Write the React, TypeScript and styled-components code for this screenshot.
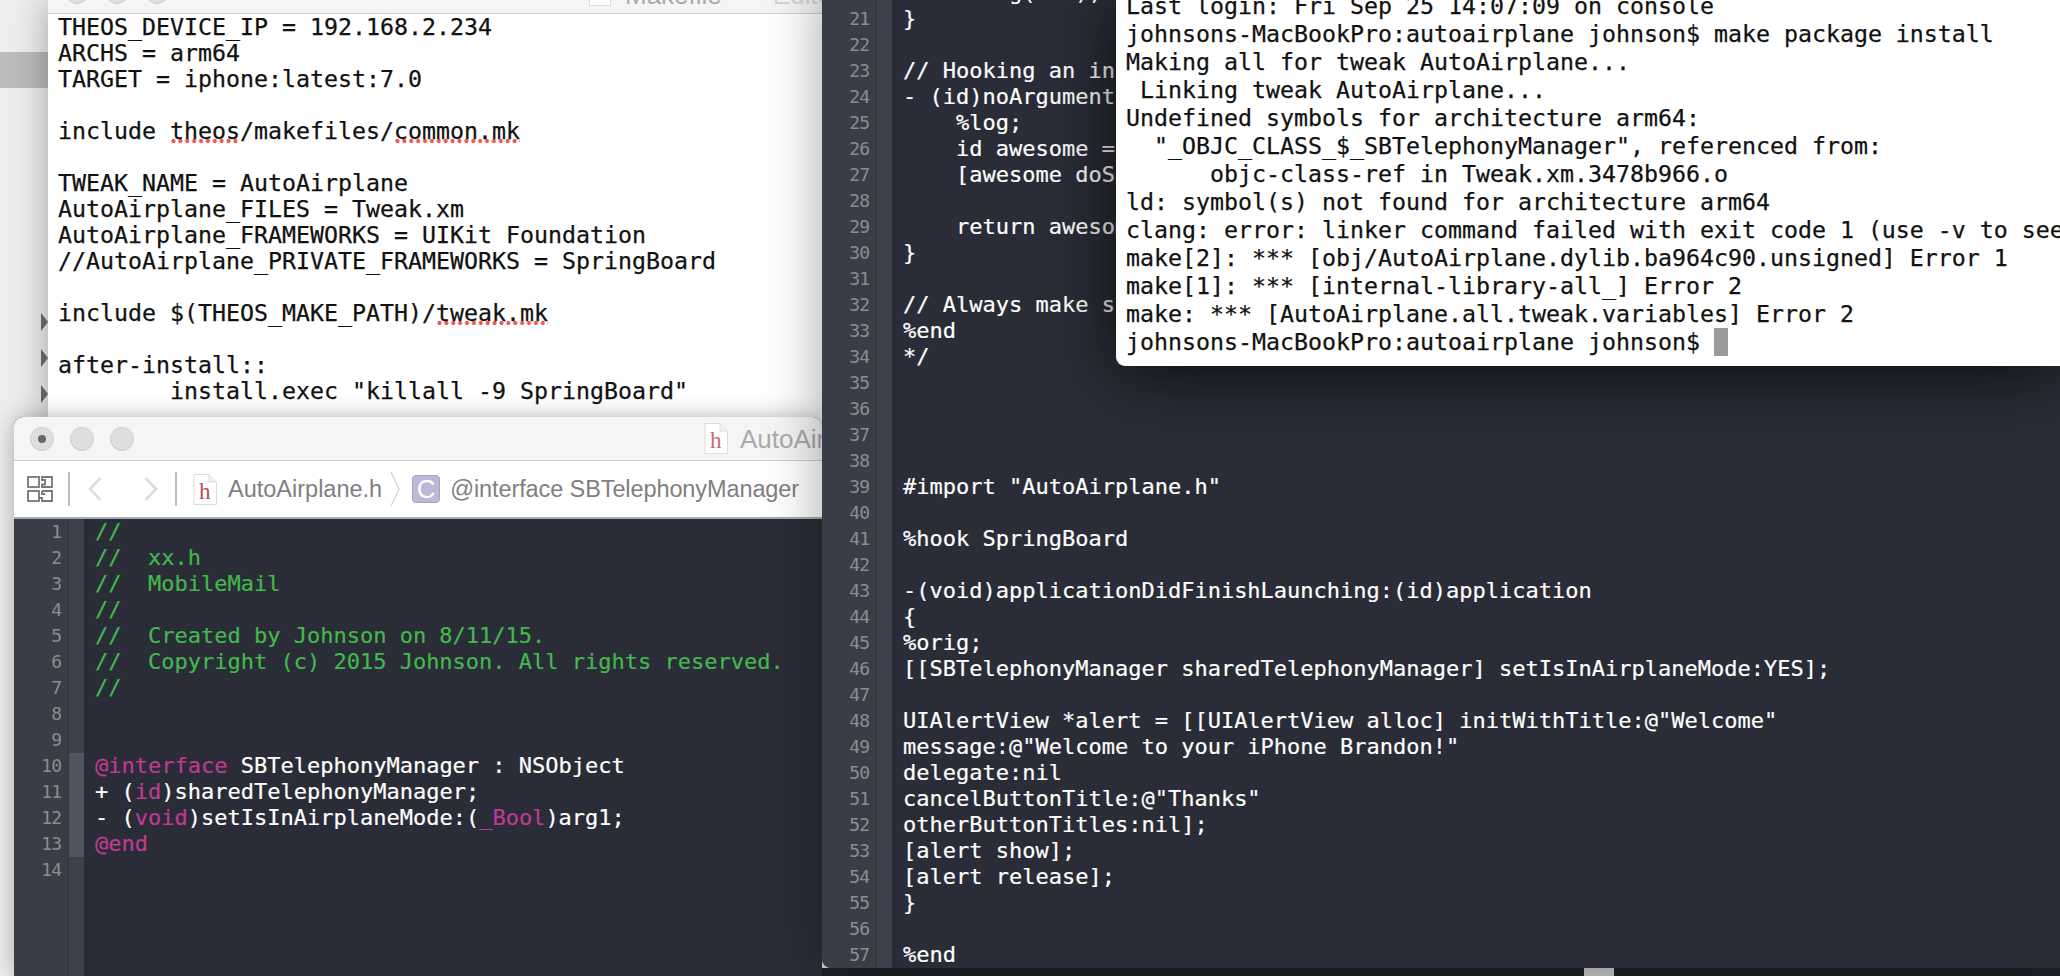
import React from "react";
import styled, { createGlobalStyle } from "styled-components";

const Global = createGlobalStyle`
  html, body { margin: 0; padding: 0; width: 100%; height: 100%; overflow: hidden; background: #eeeeee; }
  #root { width: 100%; height: 100%; }
`;

const MONO = `"DejaVu Sans Mono", "Liberation Mono", monospace`;
const SANS = `"Liberation Sans", Arial, sans-serif`;

const Desktop = styled.div`
  position: relative;
  width: 2060px;
  height: 976px;
  overflow: hidden;
  background: #eeeeee;
`;

const Sidebar = styled.div`
  position: absolute;
  left: 0;
  top: 0;
  width: 48px;
  height: 100%;
  display: flex;
  flex-direction: column;
  align-items: flex-end;
`;
const SelectedRow = styled.div`
  margin-top: 52px;
  width: 100%;
  height: 36px;
  background: #bcbcbc;
`;
const Disclosures = styled.div`
  margin-top: 225px;
  display: flex;
  flex-direction: column;
  gap: 18px;
`;
const Disclosure = styled.div`
  width: 0;
  height: 0;
  border-style: solid;
  border-width: 9px 0 9px 7px;
  border-color: transparent transparent transparent #6f6f6f;
`;

const TextWindow = styled.section`
  position: absolute;
  left: 48px;
  top: 0;
  width: 780px;
  height: 430px;
  background: #ffffff;
  box-shadow: 0 0 34px rgba(0, 0, 0, 0.32);
`;
const TitleBar = styled.header<{ $height: number; $align: string }>`
  box-sizing: content-box;
  height: ${(p) => p.$height}px;
  display: flex;
  align-items: ${(p) => p.$align};
  background: #f5f5f5;
  border-bottom: 1px solid #cfcfcf;
  overflow: hidden;
  white-space: nowrap;
`;
const Lights = styled.div<{ $left: number; $drop: number }>`
  display: flex;
  gap: 16px;
  margin-left: ${(p) => p.$left}px;
  margin-bottom: ${(p) => p.$drop}px;
  flex: none;
`;
const Light = styled.div`
  width: 24px;
  height: 24px;
  box-sizing: border-box;
  border-radius: 50%;
  background: #dedede;
  border: 1px solid #cdcdcd;
  display: flex;
  align-items: center;
  justify-content: center;
`;
const LightDot = styled.div`
  width: 8px;
  height: 8px;
  border-radius: 50%;
  background: #666666;
`;
const TitleIcon = styled.div<{ $left: number; $drop: number }>`
  margin-left: ${(p) => p.$left}px;
  margin-bottom: ${(p) => p.$drop}px;
  flex: none;
  display: flex;
`;
const BlankDoc = styled.div`
  width: 22px;
  height: 30px;
  box-sizing: border-box;
  background: #ffffff;
  border: 1px solid #dcdcdc;
`;
const TitleText = styled.span<{ $left: number; $drop: number; $pale?: boolean }>`
  margin-left: ${(p) => p.$left}px;
  margin-bottom: ${(p) => p.$drop}px;
  font: 26px/30px ${SANS};
  color: ${(p) => (p.$pale ? "#d4d4d4" : "#ababab")};
  flex: none;
`;

const PlainText = styled.div`
  padding-left: 10px;
  font: 23.25px/26px ${MONO};
  color: #111111;
  -webkit-text-stroke: 0.25px #111111;
  white-space: pre;
`;
const PlainLine = styled.div`
  height: 26px;
`;
const Misspelt = styled.span`
  background-image: radial-gradient(circle, #f25a5a 1.9px, transparent 2.2px);
  background-size: 6.9px 4px;
  background-repeat: repeat-x;
  background-position: 0 calc(100% - 1px);
`;

const XcodeWindow = styled.section`
  position: absolute;
  left: 14px;
  top: 417px;
  width: 808px;
  bottom: 0;
  display: flex;
  flex-direction: column;
  border-radius: 9px 9px 0 0;
  overflow: hidden;
  box-shadow: 0 0 22px rgba(0, 0, 0, 0.3);
  background: #2a2d38;
`;
const Toolbar = styled.nav`
  height: 56px;
  flex: none;
  display: flex;
  align-items: center;
  padding-left: 13px;
  background: #ffffff;
  border-bottom: 2px solid #a9a9a9;
  white-space: nowrap;
`;
const Separator = styled.div<{ $left: number }>`
  width: 2px;
  height: 34px;
  margin-left: ${(p) => p.$left}px;
  background: #bdbdbd;
  flex: none;
`;
const ToolIcon = styled.svg<{ $left?: number }>`
  margin-left: ${(p) => p.$left ?? 0}px;
  flex: none;
  display: block;
`;
const Crumb = styled.span<{ $left: number; $tight?: boolean }>`
  margin-left: ${(p) => p.$left}px;
  font: 23.5px/30px ${SANS};
  letter-spacing: ${(p) => (p.$tight ? "-0.1px" : "0")};
  color: #7f7f7f;
  flex: none;
`;
const ClassBadge = styled.div`
  margin-left: 12px;
  width: 28px;
  height: 28px;
  box-sizing: border-box;
  border-radius: 4px;
  background: #bfb7d8;
  border: 1px solid #a99fc9;
  color: #ffffff;
  font: 26px/26px ${SANS};
  text-align: center;
  flex: none;
`;

const EditorBody = styled.div`
  flex: 1;
  height: 100%;
  display: flex;
  min-height: 0;
  overflow: hidden;
  background: #2a2d38;
`;
const Gutter = styled.div`
  width: 55px;
  flex: none;
  box-sizing: border-box;
  padding-right: 7px;
  background: #3a3d47;
  border-right: 1px solid #30333c;
  font: 18px/26px ${MONO};
  letter-spacing: -1px;
  color: #8b8d92;
  text-align: right;
`;
const GutterNumber = styled.div`
  height: 26px;
`;
const FoldStrip = styled.div`
  width: 15px;
  flex: none;
  background: #3e414b;
`;
const FoldHighlight = styled.div<{ $from: number; $count: number }>`
  margin-top: ${(p) => p.$from * 26}px;
  height: ${(p) => p.$count * 26}px;
  background: #51545f;
`;
const Code = styled.div`
  flex: 1;
  padding-left: 11px;
  font: 22px/26px ${MONO};
  color: #ffffff;
  -webkit-text-stroke: 0.2px currentColor;
  white-space: pre;
  min-width: 0;
`;
const CodeLine = styled.div`
  height: 26px;
`;
const Comment = styled.span`
  color: #43b84c;
`;
const Keyword = styled.span`
  color: #bf3a92;
`;

const BottomStrip = styled.div`
  position: absolute;
  left: 822px;
  right: 0;
  bottom: 0;
  height: 8px;
  background: #1f2229;
`;
const ScrollThumb = styled.div`
  position: absolute;
  left: 762px;
  top: 0;
  width: 30px;
  height: 8px;
  background: #c9c9c9;
`;

const SourceWindow = styled.section`
  position: absolute;
  left: 822px;
  right: 0;
  top: -20px;
  bottom: 8px;
  display: flex;
  border-bottom-left-radius: 9px;
  overflow: hidden;
  box-shadow: 0 0 55px rgba(0, 0, 0, 0.36);
`;

const Terminal = styled.section`
  position: absolute;
  left: 1116px;
  right: 0;
  top: -8px;
  height: 374px;
  box-sizing: border-box;
  padding-left: 10px;
  background: #ffffff;
  border-bottom-left-radius: 9px;
  box-shadow: 0 8px 70px rgba(0, 0, 0, 0.7);
  font: 23.25px/28px ${MONO};
  color: #111111;
  -webkit-text-stroke: 0.25px #111111;
  white-space: pre;
  overflow: hidden;
`;
const TerminalLine = styled.div`
  height: 28px;
`;
const Cursor = styled.span`
  display: inline-block;
  width: 14px;
  height: 28px;
  vertical-align: top;
  background: #9a9a9a;
`;

const HFile = ({ ink, left = 0 }: { ink: string; left?: number }) => (
  <ToolIcon $left={left} width="24" height="31" viewBox="0 0 24 31" aria-hidden="true">
    <path d="M1 .5H16L23.5 8V30.5H1Z" fill="#ffffff" stroke="#dcdcdc" />
    <path d="M16 .5V8H23.5" fill="#f1f1f1" stroke="#dcdcdc" />
    <text x="6" y="25" fontFamily="'Liberation Serif', serif" fontSize="23" fill={ink}>h</text>
  </ToolIcon>
);

const makefile: React.ReactNode[] = [
  "THEOS_DEVICE_IP = 192.168.2.234",
  "ARCHS = arm64",
  "TARGET = iphone:latest:7.0",
  "",
  <>include <Misspelt>theos</Misspelt>/makefiles/<Misspelt>common.mk</Misspelt></>,
  "",
  "TWEAK_NAME = AutoAirplane",
  "AutoAirplane_FILES = Tweak.xm",
  "AutoAirplane_FRAMEWORKS = UIKit Foundation",
  "//AutoAirplane_PRIVATE_FRAMEWORKS = SpringBoard",
  "",
  <>include $(THEOS_MAKE_PATH)/<Misspelt>tweak.mk</Misspelt></>,
  "",
  "after-install::",
  "        install.exec \"killall -9 SpringBoard\"",
];

const header: React.ReactNode[] = [
  <Comment>//</Comment>,
  <Comment>//  xx.h</Comment>,
  <Comment>//  MobileMail</Comment>,
  <Comment>//</Comment>,
  <Comment>//  Created by Johnson on 8/11/15.</Comment>,
  <Comment>//  Copyright (c) 2015 Johnson. All rights reserved.</Comment>,
  <Comment>//</Comment>,
  "",
  "",
  <><Keyword>@interface</Keyword> SBTelephonyManager : NSObject</>,
  <>+ (<Keyword>id</Keyword>)sharedTelephonyManager;</>,
  <>- (<Keyword>void</Keyword>)setIsInAirplaneMode:(<Keyword>_Bool</Keyword>)arg1;</>,
  <Keyword>@end</Keyword>,
  "",
];

const tweak: string[] = [
  "    %orig(nil);",
  "}",
  "",
  "// Hooking an instance method with no arguments.",
  "- (id)noArguments {",
  "    %log;",
  "    id awesome = %orig;",
  "    [awesome doSomethingElse];",
  "",
  "    return awesome;",
  "}",
  "",
  "// Always make sure you clean up after yourself; Not doing so could have grave consequences!",
  "%end",
  "*/",
  "",
  "",
  "",
  "",
  "#import \"AutoAirplane.h\"",
  "",
  "%hook SpringBoard",
  "",
  "-(void)applicationDidFinishLaunching:(id)application",
  "{",
  "%orig;",
  "[[SBTelephonyManager sharedTelephonyManager] setIsInAirplaneMode:YES];",
  "",
  "UIAlertView *alert = [[UIAlertView alloc] initWithTitle:@\"Welcome\"",
  "message:@\"Welcome to your iPhone Brandon!\"",
  "delegate:nil",
  "cancelButtonTitle:@\"Thanks\"",
  "otherButtonTitles:nil];",
  "[alert show];",
  "[alert release];",
  "}",
  "",
  "%end",
];

const terminal: string[] = [
  "Last login: Fri Sep 25 14:07:09 on console",
  "johnsons-MacBookPro:autoairplane johnson$ make package install",
  "Making all for tweak AutoAirplane...",
  " Linking tweak AutoAirplane...",
  "Undefined symbols for architecture arm64:",
  "  \"_OBJC_CLASS_$_SBTelephonyManager\", referenced from:",
  "      objc-class-ref in Tweak.xm.3478b966.o",
  "ld: symbol(s) not found for architecture arm64",
  "clang: error: linker command failed with exit code 1 (use -v to see invocation)",
  "make[2]: *** [obj/AutoAirplane.dylib.ba964c90.unsigned] Error 1",
  "make[1]: *** [internal-library-all_] Error 2",
  "make: *** [AutoAirplane.all.tweak.variables] Error 2",
];

const Editor = ({ start, lines, highlight }: { start: number; lines: React.ReactNode[]; highlight?: [number, number] }) => (
  <EditorBody>
    <Gutter>
      {lines.map((_, i) => (
        <GutterNumber key={i}>{start + i}</GutterNumber>
      ))}
    </Gutter>
    <FoldStrip>
      {highlight && <FoldHighlight $from={highlight[0]} $count={highlight[1]} />}
    </FoldStrip>
    <Code>
      {lines.map((l, i) => (
        <CodeLine key={i}>{l}</CodeLine>
      ))}
    </Code>
  </EditorBody>
);

export default function App() {
  return (
    <Desktop>
      <Global />
      <Sidebar>
        <SelectedRow />
        <Disclosures>
          <Disclosure />
          <Disclosure />
          <Disclosure />
        </Disclosures>
      </Sidebar>

      <TextWindow>
        <TitleBar $height={13} $align="flex-end">
          <Lights $left={17} $drop={9}>
            <Light />
            <Light />
            <Light />
          </Lights>
          <TitleIcon $left={420} $drop={7}>
            <BlankDoc />
          </TitleIcon>
          <TitleText $left={14} $drop={3}>Makefile</TitleText>
          <TitleText $left={51} $drop={3} $pale>Edited</TitleText>
        </TitleBar>
        <PlainText>
          {makefile.map((l, i) => (
            <PlainLine key={i}>{l}</PlainLine>
          ))}
        </PlainText>
      </TextWindow>

      <XcodeWindow>
        <TitleBar $height={43} $align="center">
          <Lights $left={16} $drop={0}>
            <Light><LightDot /></Light>
            <Light />
            <Light />
          </Lights>
          <TitleIcon $left={570} $drop={0}>
            <HFile ink="#c7697a" />
          </TitleIcon>
          <TitleText $left={12} $drop={0}>AutoAirplane.h</TitleText>
        </TitleBar>
        <Toolbar>
          <ToolIcon width="26" height="26" viewBox="0 0 26 26" fill="none" stroke="#777777" strokeWidth="1.8" aria-hidden="true">
            <rect x="1" y="1" width="11" height="10" />
            <path d="M15 1H25V11H15V8.5H18V4H15Z" />
            <rect x="1" y="15" width="11" height="10" />
            <path d="M15 15H25V25H15V22H12M15 15V18H18" />
          </ToolIcon>
          <Separator $left={15} />
          <ToolIcon $left={18} width="14" height="24" viewBox="0 0 14 24" fill="none" stroke="#dddddd" strokeWidth="2.6" aria-hidden="true">
            <path d="M12.5 1L2 12L12.5 23" />
          </ToolIcon>
          <ToolIcon $left={42} width="14" height="24" viewBox="0 0 14 24" fill="none" stroke="#dddddd" strokeWidth="2.6" aria-hidden="true">
            <path d="M1.5 1L12 12L1.5 23" />
          </ToolIcon>
          <Separator $left={17} />
          <HFile ink="#b94a5e" left={16} />
          <Crumb $left={11}>AutoAirplane.h</Crumb>
          <ToolIcon $left={8} width="10" height="34" viewBox="0 0 10 34" fill="none" stroke="#cfcfcf" strokeWidth="1.2" aria-hidden="true">
            <path d="M1 0L9 17L1 34" />
          </ToolIcon>
          <ClassBadge>C</ClassBadge>
          <Crumb $left={10} $tight>@interface SBTelephonyManager</Crumb>
        </Toolbar>
        <Editor start={1} lines={header} highlight={[9, 4]} />
      </XcodeWindow>

      <BottomStrip>
        <ScrollThumb />
      </BottomStrip>

      <SourceWindow>
        <Editor start={20} lines={tweak} />
      </SourceWindow>

      <Terminal>
        {terminal.map((l, i) => (
          <TerminalLine key={i}>{l}</TerminalLine>
        ))}
        <TerminalLine>johnsons-MacBookPro:autoairplane johnson$ <Cursor /></TerminalLine>
      </Terminal>
    </Desktop>
  );
}
